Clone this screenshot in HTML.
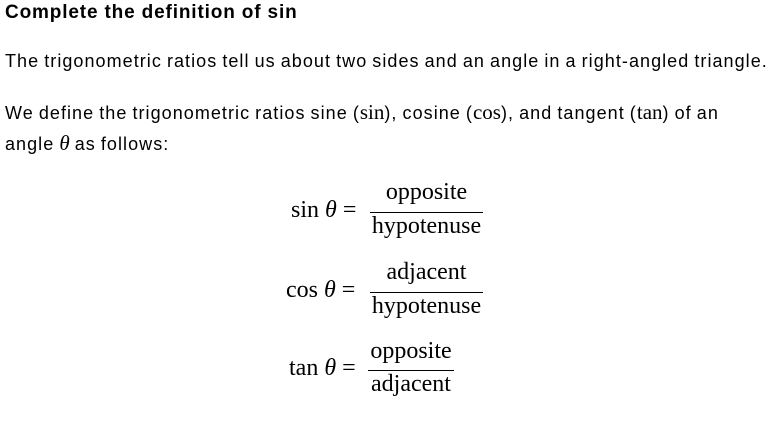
<!DOCTYPE html>
<html><head><meta charset="utf-8"><style>
body{margin:0;width:783px;height:424px;background:#fff;color:#000;font-family:"Liberation Sans",sans-serif;position:relative;overflow:hidden}
.t{position:absolute;white-space:nowrap}
.p{font-size:18px;letter-spacing:1.05px;word-spacing:-1px}
.m{font-family:"Liberation Serif",serif;font-size:21px;letter-spacing:0}
.i{font-style:italic}
.eq{position:absolute;font-family:"Liberation Serif",serif;font-size:24px;white-space:nowrap}
.fr{position:absolute;border-top:1.3px solid #000}
</style></head><body>
<div class="t" style="left:5px;top:2px;font-size:19px;font-weight:bold;letter-spacing:0.85px">Complete the definition of sin</div>
<div class="t p" style="left:5px;top:51px">The trigonometric ratios tell us about two sides and an angle in a right-angled triangle.</div>
<div class="t p" style="left:5px;top:100px">We define the trigonometric ratios sine (<span class="m">sin</span>), cosine (<span class="m">cos</span>), and tangent (<span class="m">tan</span>) of an</div>
<div class="t p" style="left:5px;top:131px">angle <span class="m i">θ</span> as follows:</div>

<div class="eq" style="left:291px;top:197px">sin <span class="i">θ</span> =</div>
<div class="eq" style="left:368px;width:117px;text-align:center;top:179px">opposite</div>
<div class="fr" style="left:370px;width:113px;top:212px"></div>
<div class="eq" style="left:368px;width:117px;text-align:center;top:213px">hypotenuse</div>

<div class="eq" style="left:286px;top:277px">cos <span class="i">θ</span> =</div>
<div class="eq" style="left:368px;width:117px;text-align:center;top:259px">adjacent</div>
<div class="fr" style="left:370px;width:113px;top:292px"></div>
<div class="eq" style="left:368px;width:117px;text-align:center;top:293px">hypotenuse</div>

<div class="eq" style="left:289px;top:355px">tan <span class="i">θ</span> =</div>
<div class="eq" style="left:366px;width:90px;text-align:center;top:338px">opposite</div>
<div class="fr" style="left:368px;width:86px;top:370px"></div>
<div class="eq" style="left:366px;width:90px;text-align:center;top:371px">adjacent</div>
</body></html>
